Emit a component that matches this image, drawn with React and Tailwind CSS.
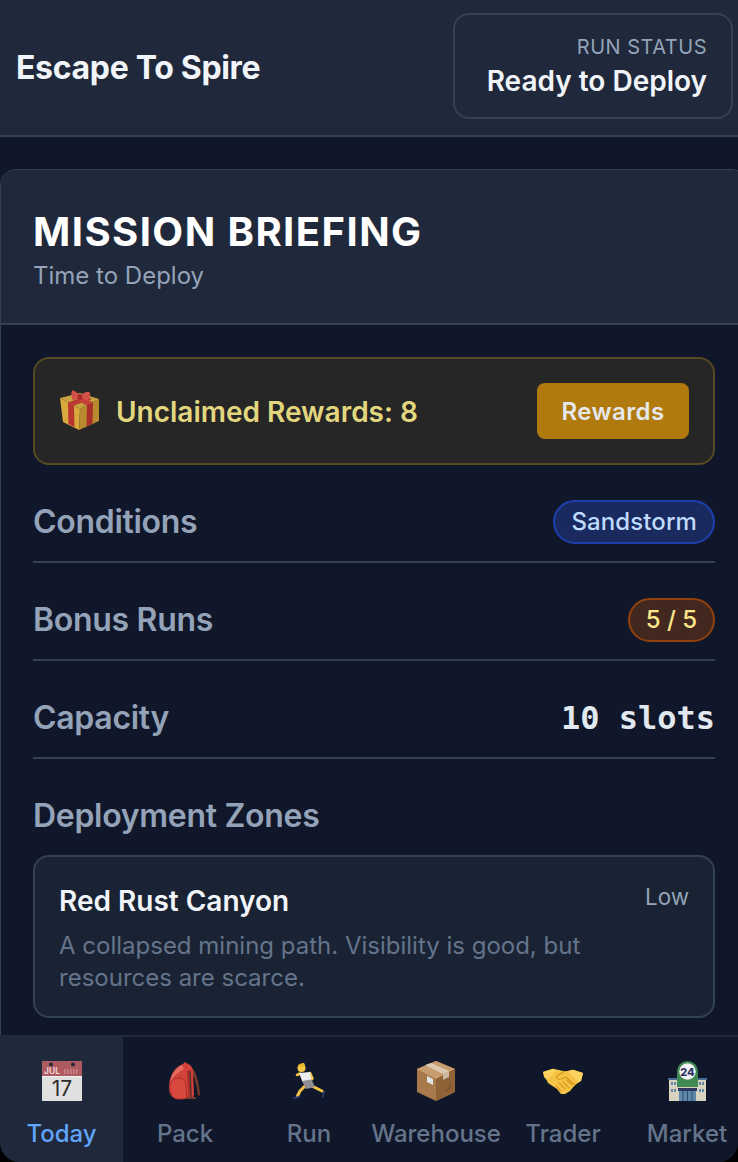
import React from "react";

const Calendar = () => (
  <svg width="40" height="40" viewBox="0 0 40 40">
    <rect width="40" height="40" fill="#e0e0e0" />
    <rect width="40" height="15" fill="#ad5a60" />
    <rect y="15" width="40" height="1" fill="#f2f2f2" />
    <circle cx="9" cy="3.500" r="2" fill="#242a38" />
    <circle cx="31" cy="3.500" r="2" fill="#242a38" />
    <text x="2" y="13" fontSize="8.500" fontWeight="600" fill="#f3dcdc" fontFamily="Inter, sans-serif">JUL</text>
    <g fill="#c98589"><rect x="22" y="8" width="1.500" height="5" /><rect x="25" y="8" width="1.500" height="5" /><rect x="28" y="8" width="1.500" height="5" /><rect x="31" y="8" width="1.500" height="5" /><rect x="34" y="8" width="1.500" height="5" /></g>
    <text x="20" y="35" textAnchor="middle" fontSize="21" fill="#2b2b2b" fontFamily="Inter, sans-serif">17</text>
  </svg>
);

const Backpack = () => (
  <svg width="32" height="38" viewBox="0 0 32 38">
    <path d="M22 5c5 3 8 16 9 28l-2 1C28 23 25 12 20 7z" fill="#7a3a2a" />
    <path d="M14 2l2-2 3 2c3 1 5 4 5 8l1 22c0 3-2 5-6 5H9C4 37 0 33 0 26 0 15 5 5 14 2z" fill="#d2423b" />
    <path d="M13 3C6 6 2 13 1 21c3-6 8-11 14-14z" fill="#e26a5f" />
    <path d="M1 25c0-6 4-9 8-9 5 0 8 3 8 8l1 12c-2 1-6 1-9 1-5 0-8-5-8-12z" fill="#d8483f" stroke="#a82d2a" strokeWidth="1" />
    <path d="M18 9l2 27h3l-1-28z" fill="#a52d29" />
    <path d="M21 10l1 25" stroke="#4a3a3c" strokeWidth="1" />
    <path d="M17 36h10" stroke="#7a3a2a" strokeWidth="2" />
  </svg>
);

const Runner = () => (
  <svg width="34" height="36" viewBox="0 0 34 36">
    <path d="M18 10l2.500 5.500-4 4.500" fill="none" stroke="#f5c242" strokeWidth="2.600" strokeLinecap="round" strokeLinejoin="round" />
    <path d="M8 10.500L5 12" fill="none" stroke="#f5c242" strokeWidth="2.600" strokeLinecap="round" />
    <path d="M13 23l-5 5-2.500 5" fill="none" stroke="#f5c242" strokeWidth="3" strokeLinecap="round" strokeLinejoin="round" />
    <path d="M20 23l10 5" fill="none" stroke="#f5c242" strokeWidth="3" strokeLinecap="round" />
    <circle cx="9.500" cy="5" r="4" fill="#f7c948" />
    <path d="M6 4c0-3 3-4 6-4l1 2-4 2z" fill="#eeb52f" />
    <path d="M7 10l11-1 1.500 8-9 2z" fill="#ededed" />
    <path d="M10 18l9.500-1.500L23 24l-9 2z" fill="#8d8d92" />
    <path d="M0.500 35l7-2.500.5 1.500-6 2z" fill="#2f4a8c" />
    <path d="M32 27.500l1 .5-2 7-1-1z" fill="#2f4a8c" />
  </svg>
);

const Box = () => (
  <svg width="38" height="40" viewBox="0 0 38 40">
    <path d="M19 0l19 8v23L19 40 0 31V8z" fill="#a8794b" />
    <path d="M19 0l19 8-19 10L0 8z" fill="#c79c6e" />
    <path d="M19 18L38 8v23L19 40z" fill="#8f6238" />
    <path d="M8 4l18 9 6-3L14 2z" fill="#dcc8ae" />
    <path d="M26 13l6-3v6l-6 3z" fill="#c9b9a3" />
    <path d="M10 15l6 3v6l-6-3z" fill="#dfe4e8" />
    <path d="M28 30l5-3v-6" fill="none" stroke="#6d4825" strokeWidth="1" />
  </svg>
);

const Handshake = () => (
  <svg width="40" height="27" viewBox="0 0 40 27">
    <path d="M0 4L10 .7l6 1.300 5 1.300 4-.3L30 1.700 40 5l-2 8-6 4-5 6-5 3h-4l-4-5-9-6z" fill="#f6c445" />
    <path d="M0 4l10-3.300L13 3 4 12 1 9z" fill="#fbd35e" />
    <path d="M25 3l5-1.300L40 5l-2 8-3 1z" fill="#fbd35e" />
    <path d="M21 3.500L14 8c-2 2 1 4 4 3l5-2 9 8" fill="none" stroke="#d9961f" strokeWidth="1.200" strokeLinecap="round" strokeLinejoin="round" />
    <path d="M13 18l5 5M16 15l6 6M20 14l6 6M24 12l5 5" fill="none" stroke="#d9961f" strokeWidth="1.100" strokeLinecap="round" />
  </svg>
);

const Store = () => (
  <svg width="39" height="40" viewBox="0 0 39 40">
    <rect x="1" y="18" width="37" height="22" fill="#d8d3bf" />
    <rect x="0" y="17" width="39" height="2" fill="#4b6a94" />
    <rect x="9" y="12" width="21" height="14" fill="#3e8a52" />
    <circle cx="19.500" cy="10.500" r="10.500" fill="#3e8a52" />
    <circle cx="19.500" cy="10.500" r="8.300" fill="#f4f4f4" />
    <text x="19.500" y="14.500" textAnchor="middle" fontSize="11" fontWeight="800" fill="#2d3560" fontFamily="Inter, sans-serif">24</text>
    <rect x="10" y="27" width="19" height="3" fill="#2d3560" />
    <rect x="11" y="30" width="17" height="10" fill="#5f88ab" />
    <path d="M15 30v10M19.500 30v10M24 30v10" stroke="#2f5273" strokeWidth="1" />
    <g fill="#5f88ab"><rect x="3" y="21" width="2" height="3" /><rect x="6" y="21" width="2" height="3" /><rect x="3" y="28" width="2" height="3" /><rect x="6" y="28" width="2" height="3" /><rect x="31" y="21" width="2" height="3" /><rect x="34" y="21" width="2" height="3" /><rect x="31" y="28" width="2" height="3" /><rect x="34" y="28" width="2" height="3" /></g>
  </svg>
);

const Gift = () => (
  <svg width="42" height="42" viewBox="0 0 42 42">
    <path d="M1 8l20-5 19 6-19 10z" fill="#c9a13f" />
    <path d="M1 8l20 11 -1 21L4 32z" fill="#d9a93e" />
    <path d="M21 19L40 9v22L20 40z" fill="#b98a30" />
    <path d="M9 12.500l6 3L15.500 37l-6-3z" fill="#b8352f" />
    <path d="M28 15l6-3-.5 21.500-6 3z" fill="#a92f2a" />
    <path d="M9 12.500L27 6l6 3-18 6.500z" fill="#bb3a33" />
    <path d="M27 15.500L13 6l6-2 14 8z" fill="#c63f38" />
    <path d="M21 6C18 2 14-.5 13 1c-1 1-1 6 1 9 3 0 5-2 7-3 2 1 5 3 8 3 2-3 3-7 1-8-2-1-6 1-9 4z" fill="#d4504a" />
    <ellipse cx="21" cy="7" rx="2.500" ry="3" fill="#a82c2a" />
  </svg>
);

const tabs = [
  { label: "Today", Icon: Calendar, w: "w-[123px]", active: true },
  { label: "Pack", Icon: Backpack, w: "w-[124px]" },
  { label: "Run", Icon: Runner, w: "w-[124px]" },
  { label: "Warehouse", Icon: Box, w: "w-[130px]" },
  { label: "Trader", Icon: Handshake, w: "w-[124px]" },
  { label: "Market", Icon: Store, w: "w-[124px]" },
];

function Row({ label, children }) {
  return (
    <div className="flex h-[98px] items-center justify-between border-b-2 border-[#334155] pt-[18px]">
      <span className="text-[32px] font-semibold tracking-[-0.3px] text-[#94a3b8]">{label}</span>
      {children}
    </div>
  );
}

export default function App() {
  return (
    <div className="h-[1162px] w-[738px] overflow-hidden bg-black font-['Inter',sans-serif]">
      <div className="flex h-full flex-col overflow-hidden rounded-b-[20px] bg-[#10172a]">
        <header className="flex h-[137px] shrink-0 items-center justify-between border-b-2 border-[#334155] bg-[#1f293b] pl-4 pr-[5px]">
          <h1 className="text-[32px] font-bold tracking-[-0.32px] text-[#f1f5f9]">Escape To Spire</h1>
          <div className="mb-1 flex h-[106px] w-[280px] flex-col items-end justify-center rounded-[16px] border-2 border-[#334155] pr-6 pt-px">
            <span className="text-[20px] leading-[28px] tracking-[0.5px] text-[#94a3b8]">RUN STATUS</span>
            <span className="mt-px text-[28px] font-semibold leading-[38px] text-[#f1f5f9]">Ready to Deploy</span>
          </div>
        </header>
        <main className="min-h-0 flex-1 overflow-hidden pt-8">
          <section className="w-[748px] rounded-[16px] border border-[#334155] pb-10">
            <div className="h-[155px] rounded-t-[15px] border-b-2 border-[#334155] bg-[#1f293b] px-8 pt-[38px]">
              <h2 className="text-[40px] font-bold leading-[48px] tracking-[1.45px] text-white">MISSION BRIEFING</h2>
              <p className="mt-1 text-[24px] leading-[32px] text-[#94a3b8]">Time to Deploy</p>
            </div>
            <div className="px-8 pt-8">
              <div className="flex h-[108px] items-center justify-between rounded-[16px] border-2 border-[#554a22] bg-[#262626] px-6">
                <div className="flex items-center gap-[15px]">
                  <Gift />
                  <span className="mt-[2px] text-[28px] font-semibold text-[#e2d67f]">Unclaimed Rewards: 8</span>
                </div>
                <button className="h-[56px] w-[152px] rounded-[8px] bg-[#b07a0e] pt-[2px] text-[24px] font-semibold tracking-[0.4px] text-[#e5e7eb]">Rewards</button>
              </div>
              <Row label="Conditions">
                <span className="flex h-[44px] items-center rounded-full border-2 border-[#1e40af] bg-[#1a2a5e] px-4 text-[24px] font-medium tracking-[0.1px] text-[#bfdbfe]">Sandstorm</span>
              </Row>
              <Row label="Bonus Runs">
                <span className="flex h-[44px] items-center rounded-full border-2 border-[#92400e] bg-[#43281f] px-4 text-[24px] font-medium text-[#fde68a]">5 / 5</span>
              </Row>
              <Row label="Capacity">
                <span className="font-['DejaVu_Sans_Mono',monospace] text-[32px] font-bold text-[#e2e8f0]">10 slots</span>
              </Row>
              <h3 className="flex h-[96px] items-center pt-[18px] text-[32px] font-semibold tracking-[-0.3px] text-[#94a3b8]">Deployment Zones</h3>
              <div className="rounded-[16px] border-2 border-[#334155] bg-[#1a2333] px-6 pb-[22px] pt-6">
                <div className="flex items-start justify-between">
                  <span className="text-[28px] font-semibold leading-[40px] text-[#f1f5f9]">Red Rust Canyon</span>
                  <span className="text-[22.400px] leading-[32px] text-[#94a3b8]">Low</span>
                </div>
                <p className="mt-[9px] w-[560px] text-[24px] leading-[32px] text-[#64748b]">A collapsed mining path. Visibility is good, but resources are scarce.</p>
              </div>
            </div>
          </section>
        </main>
        <nav className="flex h-[127px] shrink-0 overflow-hidden border-t-2 border-[#1f293b] bg-[#10172a]">
          {tabs.map(({ label, Icon, w, active }) => (
            <div key={label} className={`flex shrink-0 flex-col items-center ${w} ${active ? "bg-[#1f293b]" : ""}`}>
              <div className="mt-6 flex h-10 items-center justify-center"><Icon /></div>
              <span className={`mt-[17px] text-[24px] font-medium leading-[32px] ${active ? "text-[#60a5fa]" : "text-[#64748b]"}`}>{label}</span>
            </div>
          ))}
        </nav>
      </div>
    </div>
  );
}
